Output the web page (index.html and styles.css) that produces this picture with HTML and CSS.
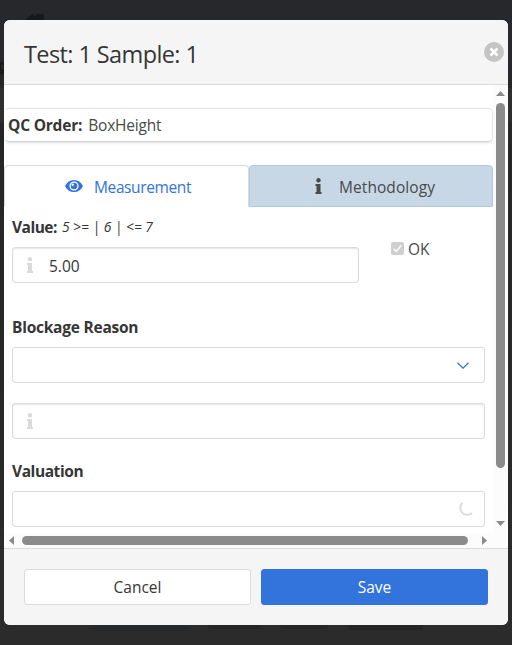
FILE: index.html
```html
<!DOCTYPE html>
<html lang="en">
<head>
<meta charset="utf-8">
<title>Test: 1 Sample: 1</title>
<link rel="stylesheet" href="styles.css">
</head>
<body>
<svg class="backdrop" viewBox="0 0 512 645" aria-hidden="true">
  <path fill="#17181a" d="M23 22 32 14 36 17V14H44V24H23z"/>
  <path fill="none" stroke="#17181a" stroke-width="2" d="M5 65Q0 61 0 66T4 71Q3 74 0 73"/>
  <path fill="#302e2c" d="M0 88H4V123H0zM508 88H512V123H508z"/>
  <path fill="#27292b" d="M90 620H188V626Q188 630 184 630H94Q90 630 90 626z"/>
  <path fill="#252525" d="M208 620H260V625Q260 629 256 629H212Q208 629 208 625zM280 620H328V625Q328 629 324 629H284Q280 629 280 625zM348 620H423V626Q423 630 419 630H352Q348 630 348 626z"/>
</svg>
<main class="modal">
  <header class="modal-head">
    <h1>Test: 1 Sample: 1</h1>
    <button class="close" aria-label="Close"><svg viewBox="0 0 20 20"><path d="M6.500 6.500 13.500 13.500M13.500 6.500 6.500 13.500" stroke="#fff" stroke-width="2.500"/></svg></button>
  </header>
  <section class="modal-body">
    <div class="content">
      <div class="order"><b class="t-order">QC Order:</b><span class="t-box">BoxHeight</span></div>
      <nav class="tabs">
        <a class="tab active"><svg class="eye" viewBox="0 0 18 12"><path fill="#3273dc" fill-rule="evenodd" d="M9 0C5 0 2 2 0 6c2 4 5 6 9 6s7-2 9-6C16 2 13 0 9 0zM9 1.400a4.600 4.600 0 1 1 0 9.200A4.600 4.600 0 0 1 9 1.400z"/><circle cx="9" cy="6" r="3.300" fill="#3273dc"/><circle cx="7.700" cy="4.700" r="1.200" fill="#fff"/></svg><span class="t-meas">Measurement</span></a>
        <a class="tab"><svg class="info" viewBox="0 0 6 16"><circle cx="3" cy="2.300" r="2.200"/><path d="M0 6H5V14H6V16H0V14H1V8H0z"/></svg><span class="t-meth">Methodology</span></a>
      </nav>
      <div class="form">
        <div class="value-row">
          <div class="value-field">
            <div class="label"><b class="t-value">Value:</b><i class="t-range">5 &gt;= | 6 | &lt;= 7</i></div>
            <div class="input"><svg class="info" viewBox="0 0 6 16"><circle cx="3" cy="2.300" r="2.200"/><path d="M0 6H5V14H6V16H0V14H1V8H0z"/></svg><span class="t-num">5.00</span></div>
          </div>
          <div class="ok"><svg viewBox="0 0 13 13"><rect width="13" height="13" rx="2" fill="#cfcfcf"/><path d="M2.700 6.800 5.200 9.400 10.400 3.300" fill="none" stroke="#f5f5f5" stroke-width="1.700"/></svg><span class="t-ok">OK</span></div>
        </div>
        <div class="label"><b class="t-block">Blockage Reason</b></div>
        <div class="input select"><svg class="chevron" viewBox="0 0 12 7"><path d="M.5.7 6 6.100 11.500.7" fill="none" stroke="#3273dc" stroke-width="1.300"/></svg></div>
        <div class="input reason"><svg class="info" viewBox="0 0 6 16"><circle cx="3" cy="2.300" r="2.200"/><path d="M0 6H5V14H6V16H0V14H1V8H0z"/></svg></div>
        <div class="label valuation"><b class="t-valu">Valuation</b></div>
        <div class="input select"><svg class="spinner" viewBox="0 0 16 16"><path d="M4.500 1.700A7 7 0 1 0 14 12" fill="none" stroke="#dbdbdb" stroke-width="2"/></svg></div>
      </div>
    </div>
    <div class="vbar"><svg class="va" viewBox="0 0 9 5"><path d="M0 5 4.500 0 9 5z"/></svg><span class="vthumb"></span><svg class="va" viewBox="0 0 9 5"><path d="M0 0H9L4.500 5z"/></svg></div>
    <div class="hbar"><svg class="ha" viewBox="0 0 5 9"><path d="M5 0V9L0 4.500z"/></svg><span class="hthumb"></span><svg class="ha" viewBox="0 0 5 9"><path d="M0 0V9L5 4.500z"/></svg></div>
  </section>
  <footer class="modal-foot">
    <button class="btn"><span class="t-cancel">Cancel</span></button>
    <button class="btn primary"><span class="t-save">Save</span></button>
  </footer>
</main>
</body>
</html>
```
FILE: styles.css
```css
* { box-sizing: border-box; }
body {
  margin: 0;
  height: 645px;
  padding: 20px 4px;
  overflow: hidden;
  background: linear-gradient(#27282c 0, #27282c 50px, #272626 160px, #2b2b2b 645px);
  font: 15.5px/24px "Open Sans", "Noto Sans", sans-serif;
  color: #363636;
}
svg { display: block; flex: none; }
button { font: inherit; color: inherit; padding: 0; }
span, b, i { white-space: nowrap; }
.backdrop { position: absolute; inset: 0; width: 512px; height: 645px; z-index: -1; }
.modal {
  display: flex;
  flex-direction: column;
  width: 504px;
  height: 605px;
  border-radius: 6px;
  overflow: hidden;
  background: #fff;
}
.modal-head {
  display: flex;
  align-items: center;
  justify-content: space-between;
  height: 65px;
  padding: 0 4px 0 20px;
  border-bottom: 1px solid #dbdbdb;
  background: #f5f5f5;
}
h1 { margin: 3px 0 0; font-size: 23.5px; font-weight: 400; line-height: 24px; letter-spacing: -.6px; }
.close { width: 20px; height: 20px; border: 0; border-radius: 50%; background: #c4c4c4; }
.modal-body {
  display: grid;
  grid-template: 448px 15px / 489px 15px;
  height: 463px;
}
.content { padding-top: 23px; overflow: hidden; }
.order {
  display: flex;
  gap: 6px;
  height: 34px;
  padding: 4px 4px;
  border: 1px solid #e3e3e3;
  border-left-color: transparent;
  border-bottom-color: #cfd1d1;
  border-radius: 5px;
  box-shadow: 0 1px 3px rgba(0, 0, 0, .12);
}
.order b { margin-left: -1px; }
.order span { color: #4a4a4a; }
.t-order { letter-spacing: -.2px; }
.t-box { letter-spacing: -.2px; }
.t-meas { letter-spacing: -.38px; }
.t-meth { letter-spacing: .07px; margin-left: 1px; }
.t-value { letter-spacing: -.5px; }
.t-block { letter-spacing: -.24px; }
.t-valu { letter-spacing: -.42px; }
.tabs { display: flex; height: 42px; margin-top: 23px; }
.tab {
  display: flex;
  align-items: center;
  width: 244px;
  padding: 0 0 0 65px;
  border: 1px solid #b0c9e1;
  border-radius: 4px 4px 0 0;
  background: #c8d7e6;
  color: #4a4a4a;
}
.tab span, .input span { padding-top: 2px; }
.tab.active {
  width: 245px;
  padding-left: 60px;
  border-color: #dbdbdb #dbdbdb transparent;
  background: #fff;
  color: #3273dc;
}
.eye { width: 18px; height: 12px; margin-right: 11px; }
.info { width: 6px; height: 16px; fill: #4a4a4a; }
.tab .info { width: 7px; height: 16px; margin: 0 16px 0 0; }
.form { padding: 8px 8px 0; }
.value-row { display: flex; height: 100px; }
.value-field { width: 347px; }
.label { display: flex; height: 24px; gap: 5px; margin-bottom: 8px; }
.label i { font-size: 13.8px; }
.input {
  display: flex;
  align-items: center;
  height: 36px;
  padding-left: 14px;
  border: 1px solid #dbdbdb;
  border-radius: 3px;
  box-shadow: inset 0 1px 2px rgba(10, 10, 10, .1);
}
.input .info { fill: #dbdbdb; margin-right: 16px; }
.select { justify-content: flex-end; padding-right: 10px; box-shadow: none; }
.reason { margin: 20px 0; }
.ok { display: flex; align-items: center; height: 24px; margin: 22px 0 0 32px; gap: 4px; color: #4a4a4a; }
.ok svg { width: 13px; height: 13px; margin-top: -1px; }
.chevron { width: 12px; height: 7px; margin-right: 5px; }
.spinner { width: 16px; height: 16px; }
.vbar {
  display: flex;
  flex-direction: column;
  align-items: center;
  padding-top: 6px;
  background: #fcfcfc;
  fill: #8b8b8b;
}
.va { width: 9px; height: 5px; }
.vthumb { width: 9px; height: 365px; margin: 7px 0 53px; border-radius: 5px; background: #8b8b8b; }
.hbar {
  grid-column: 1 / 3;
  display: flex;
  align-items: center;
  padding-left: 5px;
  background: #fcfcfc;
  fill: #8b8b8b;
}
.ha { width: 5px; height: 9px; }
.hthumb { width: 446px; height: 9px; margin: 0 14px 0 8px; border-radius: 5px; background: #8b8b8b; }
.modal-foot {
  display: flex;
  gap: 10px;
  height: 77px;
  padding: 20px;
  border-top: 1px solid #dbdbdb;
  background: #f5f5f5;
}
.btn { flex: 1; height: 36px; border: 1px solid #dbdbdb; border-radius: 3px; background: #fff; }
.primary { border-color: #3273dc; background: #3273dc; color: #fff; }
```
